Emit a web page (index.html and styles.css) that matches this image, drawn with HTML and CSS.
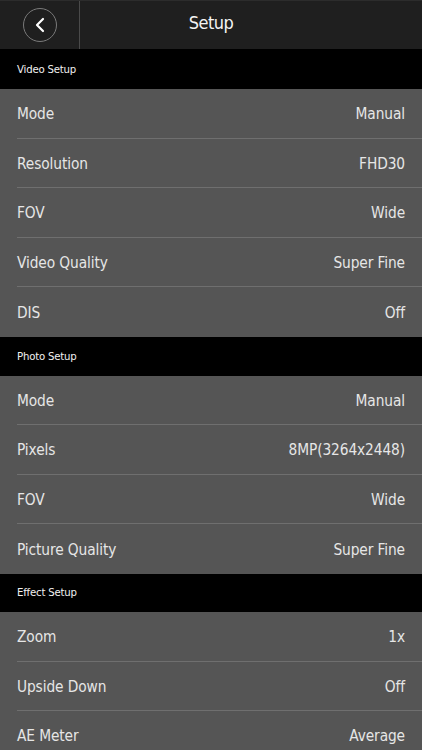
FILE: index.html
```html
<html>
    <head>
        <meta name="viewport" content="width=device-width, initial-scale=1">
        <link rel="stylesheet" href="styles.css">
    </head>
    <body>
        <div class="topbar">
            <div class="back">
                <span class="circle">
                    <svg width="14" height="16" viewBox="0 0 14 16"><path d="M10 2 L4 8 L10 14" fill="none" stroke="#fff" stroke-width="2.2" stroke-linecap="round" stroke-linejoin="round"/></svg>
                </span>
            </div>
            <div class="title">Setup</div>
        </div>

        <div class="section s1">Video Setup</div>
        <div class="row"><span>Mode</span><span>Manual</span></div>
        <div class="row"><span>Resolution</span><span>FHD30</span></div>
        <div class="row"><span>FOV</span><span>Wide</span></div>
        <div class="row"><span>Video Quality</span><span>Super Fine</span></div>
        <div class="row last"><span>DIS</span><span>Off</span></div>

        <div class="section s2">Photo Setup</div>
        <div class="row"><span>Mode</span><span>Manual</span></div>
        <div class="row"><span>Pixels</span><span>8MP(3264x2448)</span></div>
        <div class="row"><span>FOV</span><span>Wide</span></div>
        <div class="row last"><span>Picture Quality</span><span>Super Fine</span></div>

        <div class="section s3">Effect Setup</div>
        <div class="row"><span>Zoom</span><span>1x</span></div>
        <div class="row"><span>Upside Down</span><span>Off</span></div>
        <div class="row"><span>AE Meter</span><span>Average</span></div>
    </body>
</html>
```
FILE: styles.css
```css
body{
    margin: 0; background: #555555; overflow: hidden;
    font-family: "DejaVu Sans Condensed", "DejaVu Sans", sans-serif; font-stretch: condensed;
    color: #e6e6e6;
}
.topbar{
    display: flex; height: 48px; background: #1f1f1f; border-top: 1px solid #2c2c2c;
}
.back{
    width: 79px; border-right: 1px solid #4a4a4a;
    display: flex; align-items: center; justify-content: center;
}
.circle{
    width: 34px; height: 34px; border: 1px solid #7a7a7a; border-radius: 50%;
    display: flex; align-items: center; justify-content: center; box-sizing: border-box;
}
.title{
    flex: 1; display: flex; align-items: center; justify-content: center;
    color: #f4f4f4; font-size: 18px; letter-spacing: -0.5px;
    padding-right: 80px; padding-bottom: 5px;
}
.section{
    background: #000; color: #f0f0f0; font-size: 11.3px; letter-spacing: -0.2px;
    display: flex; align-items: center; padding-left: 17px;
}
.s1{ height: 40px; }
.s2{ height: 39px; }
.s3{ height: 38.5px; }
.row{
    height: 49.5px; margin-left: 17px; padding-right: 17px; padding-top: 2px;
    display: flex; align-items: center; justify-content: space-between;
    border-bottom: 1px solid #6f6f6f; box-sizing: border-box;
    font-size: 15.3px; letter-spacing: -0.1px;
}
.row.last{ border-bottom: none; }
```
